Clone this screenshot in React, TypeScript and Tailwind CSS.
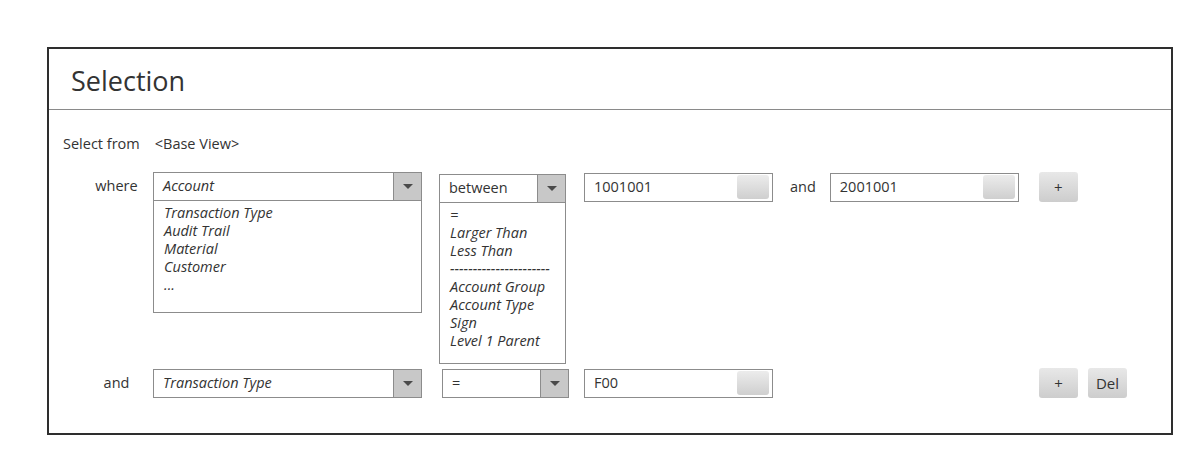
import { ReactNode } from 'react';

const font = { fontFamily: '"Open Sans", "Noto Sans", sans-serif' };

function Caret() {
  return (
    <div className="flex w-[28px] shrink-0 items-center justify-center border-l border-[#8c8c8c] bg-[#c8c8c8]">
      <div className="h-0 w-0 border-x-[5px] border-t-[5px] border-x-transparent border-t-[#4a4a4a]" />
    </div>
  );
}

function Combo({ value, width, italic, items }: { value: string; width: string; italic?: boolean; items?: { rows: string[]; height: string } }) {
  return (
    <div className={`flex flex-col ${width}`}>
      <div className="flex h-[29px] border border-[#8c8c8c] bg-white">
        <div className={`flex flex-1 items-center pl-[9px] text-[14.5px] text-[#333] ${italic ? 'italic' : ''}`}>{value}</div>
        <Caret />
      </div>
      {items && (
        <div className={`-mt-px border border-[#8c8c8c] bg-white px-[10px] pt-[3px] ${items.height}`}>
          {items.rows.map((r) => (
            <div key={r} className="h-[18px] whitespace-nowrap text-[14.5px] leading-[18px] text-[#333] italic">
              {r}
            </div>
          ))}
        </div>
      )}
    </div>
  );
}

function Field({ value }: { value: string }) {
  return (
    <div className="flex h-[29px] w-[189px] items-center border border-[#8c8c8c] bg-white pl-[9px] pr-[3px]">
      <span className="flex-1 text-[14.5px] text-[#333]">{value}</span>
      <div className="h-[24px] w-[32px] rounded-[3px] bg-gradient-to-b from-[#ececec] to-[#cfcfcf]" />
    </div>
  );
}

function Btn({ children }: { children: ReactNode }) {
  return (
    <div className="flex h-[30px] w-[39px] items-center justify-center rounded-[3px] bg-gradient-to-b from-[#e8e8e8] to-[#cdcdcd] text-[15px] text-[#333]">
      {children}
    </div>
  );
}

function Label({ children }: { children: ReactNode }) {
  return <div className="flex h-[29px] w-[73px] shrink-0 items-center justify-center text-[14.5px] text-[#333]">{children}</div>;
}

export default function App() {
  return (
    <div className="h-[466px] w-[1204px] bg-white pl-[47px] pt-[47px]" style={font}>
      <div className="flex h-[388px] w-[1126px] flex-col border-2 border-[#2e2e2e]">
        <div className="flex h-[61px] items-center border-b border-[#8a8a8a] pl-[22px] pt-[5px]">
          <h1 className="text-[27px] text-[#333]">Selection</h1>
        </div>

        <div className="flex items-center pl-[14px] pt-[23px] text-[14.5px] text-[#333]">
          <span>Select from</span>
          <span className="ml-[15px]">&lt;Base View&gt;</span>
        </div>

        <div className="mt-[17px] flex items-start pl-[31px]">
          <Label>where</Label>
          <Combo
            value="Account"
            width="w-[269px]"
            italic
            items={{ rows: ['Transaction Type', 'Audit Trail', 'Material', 'Customer', '...'], height: 'h-[113px]' }}
          />
          <div className="ml-[17px] mt-[2px]">
            <Combo
              value="between"
              width="w-[127px]"
              items={{
                rows: ['=', 'Larger Than', 'Less Than', '----------------------', 'Account Group', 'Account Type', 'Sign', 'Level 1 Parent'],
                height: 'h-[162px]',
              }}
            />
          </div>
          <div className="ml-[18px] mt-[1px]">
            <Field value="1001001" />
          </div>
          <div className="ml-[17px] flex h-[31px] items-center text-[14.5px] text-[#333]">and</div>
          <div className="ml-[14px] mt-[1px]">
            <Field value="2001001" />
          </div>
          <div className="ml-[20px]">
            <Btn>+</Btn>
          </div>
        </div>

        <div className="mt-[5px] flex items-start pl-[31px]">
          <Label>and</Label>
          <Combo value="Transaction Type" width="w-[269px]" italic />
          <div className="ml-[20px]">
            <Combo value="=" width="w-[127px]" />
          </div>
          <div className="ml-[15px]">
            <Field value="F00" />
          </div>
          <div className="ml-[266px] -mt-px">
            <Btn>+</Btn>
          </div>
          <div className="ml-[10px] -mt-px">
            <Btn>Del</Btn>
          </div>
        </div>
      </div>
    </div>
  );
}
